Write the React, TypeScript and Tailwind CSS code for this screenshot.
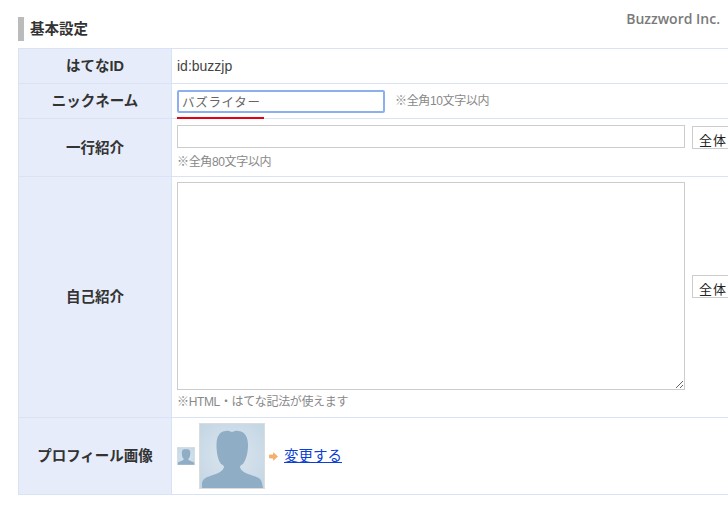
import React from 'react';

const Avatar = ({ size, id }: { size: number; id: string }) => (
  <svg width={size} height={size} viewBox="0 0 66 66" className="block shrink-0">
    <defs>
      <radialGradient id={id} cx="50%" cy="50%" r="70%">
        <stop offset="0%" stopColor="#dbe6ef" />
        <stop offset="100%" stopColor="#c3d5e3" />
      </radialGradient>
    </defs>
    <rect x="0.5" y="0.5" width="65" height="65" fill={`url(#${id})`} stroke="#dcdcdc" />
    <path
      d="M3 65 L3 60 C4 55 8 54 14 52 C20 50 24 48 25 44 C25 43 24 42 22 41 C19 37 17.500 30 17.500 22 C17.500 13 21 8 27 8 C30 7 32 9 33 9 C34 9 36 7 39 8 C45 8 49 13 49 22 C49 30 47 37 44 41 C42 42 41 43 41 44 C42 48 46 50 52 52 C58 54 62 55 63 60 L64 65 Z"
      fill="#90adc6"
    />
  </svg>
);

const Row = ({ label, height, children, last }: { label: string; height: string; children: React.ReactNode; last?: boolean }) => (
  <div className={`flex border-t border-[#d9e3f3] ${height} ${last ? 'border-b' : ''}`}>
    <div className="w-[154px] shrink-0 flex items-center justify-center pt-[2px] bg-[#e6ecf9] border-l border-r border-[#d9e3f3] text-[14.5px] font-bold text-[#333]">
      {label}
    </div>
    <div className="flex-1 min-w-0 pl-[5px]">{children}</div>
  </div>
);

const ScopeButton = () => (
  <button className="w-[80px] h-[23px] shrink-0 bg-white border border-[#ccc] text-[13px] leading-[15px] text-[#222] text-left pl-[6px] pt-[6px] tracking-[1px] whitespace-nowrap overflow-hidden">
    全体に公開
  </button>
);

export default function App() {
  return (
    <div
      className="relative w-[728px] h-[508px] overflow-hidden bg-white text-[#333]"
      style={{ fontFamily: '"Liberation Sans", "Noto Sans CJK JP", sans-serif' }}
    >
      <div className="absolute right-[8px] top-[8px] text-[14px] font-semibold text-[#7a7a7a]" style={{ fontFamily: '"Open Sans", sans-serif' }}>
        Buzzword Inc.
      </div>

      <div className="pt-[17px] pl-[18px] w-[800px]">
        <div className="h-[24px] border-l-[6px] border-[#bbb] pl-[6px] flex items-center text-[14.5px] font-bold leading-none">基本設定</div>

        <div className="mt-[7px]">
          <Row label="はてなID" height="h-[35px]">
            <div className="h-full flex items-center text-[14px] text-[#444]">id:buzzjp</div>
          </Row>

          <Row label="ニックネーム" height="h-[35px]">
            <div className="relative h-full flex items-center gap-[10px]">
              <input
                readOnly
                value="バズライター"
                className="w-[208px] h-[23px] border-2 border-[#8cb0ee] rounded-[2px] px-[3px] text-[12.5px] tracking-[0.7px] text-[#666] outline-none bg-white"
              />
              <span className="text-[12px] tracking-[-0.35px] text-[#888]">※全角10文字以内</span>
              <div className="absolute left-0 top-[33px] w-[87px] h-[2px] bg-[#e60012]" />
            </div>
          </Row>

          <Row label="一行紹介" height="h-[58px]">
            <div className="pt-[6px]">
              <div className="flex items-start gap-[7px]">
                <input readOnly className="w-[508px] h-[23px] border border-[#ccc] bg-white outline-none" />
                <div className="pt-px">
                  <ScopeButton />
                </div>
              </div>
              <div className="mt-[1px] text-[12px] tracking-[-0.35px] leading-[18px] text-[#888]">※全角80文字以内</div>
            </div>
          </Row>

          <Row label="自己紹介" height="h-[241px]">
            <div className="pt-[5px]">
              <div className="flex items-center gap-[7px]">
                <textarea readOnly className="w-[508px] h-[208px] block border border-[#ccc] bg-white outline-none" />
                <ScopeButton />
              </div>
              <div className="mt-[3px] text-[12px] tracking-[-0.35px] leading-[18px] text-[#888]">※HTML・はてな記法が使えます</div>
            </div>
          </Row>

          <Row label="プロフィール画像" height="h-[78px]" last>
            <div className="h-full flex items-center">
              <Avatar size={18} id="avatar-small" />
              <div className="ml-[4px]">
                <Avatar size={66} id="avatar-large" />
              </div>
              <svg width="9" height="9" viewBox="0 0 9 9" className="ml-[4px] shrink-0">
                <path d="M0.5 3 H4.500 V0.800 L8.500 4.500 L4.500 8.200 V6 H0.500 Z" fill="#f6b26b" stroke="#f0a050" strokeWidth="0.6" />
              </svg>
              <a href="#" className="ml-[6px] pt-[1px] text-[14.5px] text-[#0b3fd6] underline">変更する</a>
            </div>
          </Row>
        </div>
      </div>
    </div>
  );
}
